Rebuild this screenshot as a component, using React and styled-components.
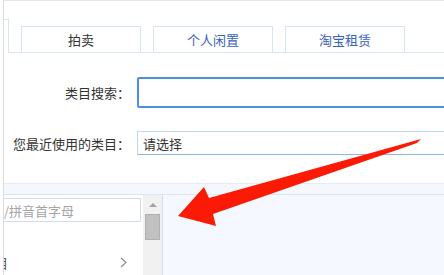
import React from "react";
import styled, { createGlobalStyle } from "styled-components";

const GlobalStyle = createGlobalStyle`
  html, body {
    margin: 0;
    padding: 0;
    background: #ffffff;
    overflow: hidden;
  }
  body {
    font-family: "Noto Sans CJK SC", "Noto Sans", sans-serif;
    font-size: 13px;
    color: #333;
  }
`;

const Page = styled.div`
  position: relative;
  width: 444px;
  height: 275px;
  overflow: hidden;
  background: #fff;
`;

const Panel = styled.div`
  margin-left: 3px;
  height: 274px;
  border-left: 1px solid #dcdcdc;
  border-top: 1px solid #e6e6e6;
  display: flex;
  flex-direction: column;
`;

const TabRow = styled.div`
  display: flex;
  align-items: flex-end;
  padding-top: 18px;
  border-bottom: 1px solid #d6e4f6;
`;

const ActiveTab = styled.div`
  width: 4px;
  height: 33px;
  background: #fff;
  border-top: 1px solid #d6e4f6;
  border-right: 1px solid #d6e4f6;
  margin-bottom: -1px;
`;

const Tab = styled.div`
  width: 118px;
  height: 25px;
  margin-left: 12px;
  border: 1px solid #d6e4f6;
  border-bottom: none;
  display: flex;
  align-items: center;
  justify-content: center;
  font-size: 13px;
  color: ${(p) => (p.$dark ? "#333" : "#3a62bd")};
`;

const Form = styled.div`
  padding-top: 24px;
  display: flex;
  flex-direction: column;
  gap: 23px;
`;

const FormRow = styled.div`
  display: flex;
  align-items: center;
  gap: 7px;
`;

const Label = styled.div`
  width: 126px;
  flex-shrink: 0;
  text-align: right;
  font-size: 13px;
  color: #333;
  white-space: nowrap;
`;

const SearchInput = styled.div`
  flex: 1;
  height: 27px;
  margin-right: -10px;
  border: 2px solid #4a8fe6;
  border-radius: 2px;
  background: #fff;
`;

const Select = styled.div`
  flex: 1;
  height: 22px;
  margin-right: -10px;
  border: 1px solid #c3d5ea;
  border-bottom-color: #8db6e3;
  display: flex;
  align-items: center;
  padding-left: 5px;
  font-size: 13px;
  color: #333;
`;

const Band = styled.div`
  margin-top: 28px;
  height: 10px;
  background: #f4f7fc;
  border-top: 1px solid #e2ebf6;
  border-bottom: 1px solid #dde7f3;
`;

const Browser = styled.div`
  flex: 1;
  display: flex;
  min-height: 0;
`;

const LeftColumn = styled.div`
  width: 139px;
  background: #fff;
  overflow: hidden;
  display: flex;
  flex-direction: column;
`;

const FilterBox = styled.div`
  margin-top: 3px;
  width: 136px;
  height: 22px;
  border: 1px solid #d3dde9;
  border-left: none;
  display: flex;
  align-items: center;
  font-size: 13px;
  color: #a5a5a5;
  white-space: nowrap;
`;

const ListItem = styled.div`
  margin-top: 31px;
  height: 18px;
  display: flex;
  align-items: center;
  justify-content: space-between;
  padding-right: 16px;
  overflow: hidden;
`;

const ClippedText = styled.span`
  margin-left: -9px;
  font-size: 13px;
  color: #555;
`;

const Scrollbar = styled.div`
  width: 19px;
  background: #f1f1f1;
  border-right: 1px solid #cddff4;
  display: flex;
  flex-direction: column;
  align-items: center;
`;

const ScrollUp = styled.div`
  margin-top: 8px;
  width: 0;
  height: 0;
  border-left: 4px solid transparent;
  border-right: 4px solid transparent;
  border-bottom: 4px solid #a3a3a3;
`;

const Thumb = styled.div`
  margin-top: 7px;
  width: 13px;
  height: 24px;
  background: #c1c1c1;
  border: 1px solid #b0b0b0;
`;

const RightArea = styled.div`
  flex: 1;
  background: #f5f8fe;
`;

const Arrow = styled.svg`
  position: absolute;
  left: 0;
  top: 0;
  pointer-events: none;
`;

export default function App() {
  return (
    <Page>
      <GlobalStyle />
      <Panel>
        <TabRow>
          <ActiveTab />
          <Tab $dark>拍卖</Tab>
          <Tab>个人闲置</Tab>
          <Tab>淘宝租赁</Tab>
        </TabRow>
        <Form>
          <FormRow>
            <Label>类目搜索：</Label>
            <SearchInput />
          </FormRow>
          <FormRow>
            <Label>您最近使用的类目：</Label>
            <Select>请选择</Select>
          </FormRow>
        </Form>
        <Band />
        <Browser>
          <LeftColumn>
            <FilterBox>/拼音首字母</FilterBox>
            <ListItem>
              <ClippedText>目</ClippedText>
              <svg width="7" height="11" viewBox="0 0 7 11">
                <polyline points="1,1 6,5.5 1,10" fill="none" stroke="#888" strokeWidth="1.1" />
              </svg>
            </ListItem>
          </LeftColumn>
          <Scrollbar>
            <ScrollUp />
            <Thumb />
          </Scrollbar>
          <RightArea />
        </Browser>
      </Panel>
      <Arrow width="444" height="275" viewBox="0 0 444 275">
        <polygon
          points="178,216 204,187 209,198 421,139 417,143 213,214 216,226"
          fill="#fb1a05"
        />
      </Arrow>
    </Page>
  );
}
